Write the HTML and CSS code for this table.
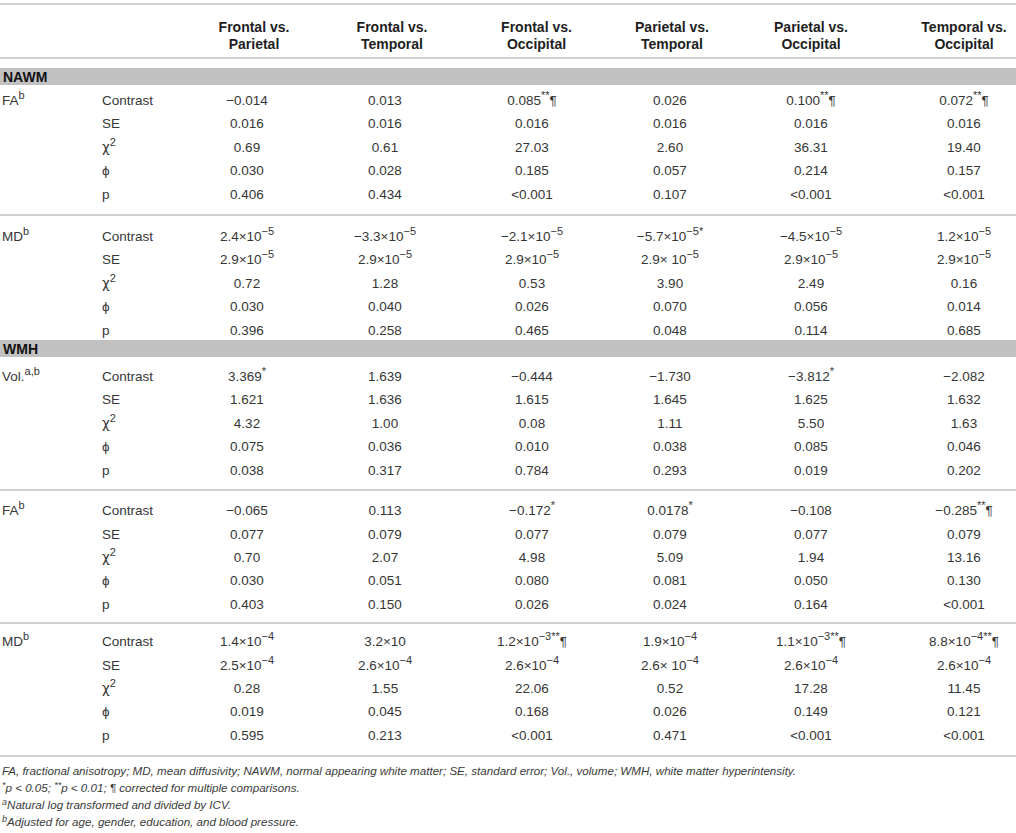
FILE: index.html
```html
<!DOCTYPE html>
<html>
<head>
<meta charset="utf-8">
<link rel="stylesheet" href="styles.css">
</head>
<body>
<table class="stats">
  <colgroup>
    <col class="c-lab"><col class="c-stat"><col class="c-d1"><col class="c-d2"><col class="c-d3"><col class="c-d4"><col class="c-d5"><col class="c-d6">
  </colgroup>
  <thead>
    <tr>
      <th></th><th></th>
      <th class="h1">Frontal vs.<br>Parietal</th>
      <th class="h2">Frontal vs.<br>Temporal</th>
      <th class="h3">Frontal vs.<br>Occipital</th>
      <th class="h4">Parietal vs.<br>Temporal</th>
      <th>Parietal vs.<br>Occipital</th>
      <th class="last">Temporal vs.<br>Occipital</th>
    </tr>
  </thead>
  <tbody class="section first-section">
    <tr><td colspan="8"><div class="band">NAWM</div></td></tr>
  </tbody>
  <tbody class="group g1">
    <tr><td class="lab">FA<sup>b</sup></td><td class="stat">Contrast</td><td>−0.014</td><td>0.013</td><td>0.085<sup>**</sup>¶</td><td>0.026</td><td>0.100<sup>**</sup>¶</td><td class="last">0.072<sup>**</sup>¶</td></tr>
    <tr><td></td><td class="stat">SE</td><td>0.016</td><td>0.016</td><td>0.016</td><td>0.016</td><td>0.016</td><td class="last">0.016</td></tr>
    <tr><td></td><td class="stat"><span class="chi">χ</span><sup>2</sup></td><td>0.69</td><td>0.61</td><td>27.03</td><td>2.60</td><td>36.31</td><td class="last">19.40</td></tr>
    <tr><td></td><td class="stat">ϕ</td><td>0.030</td><td>0.028</td><td>0.185</td><td>0.057</td><td>0.214</td><td class="last">0.157</td></tr>
    <tr><td></td><td class="stat">p</td><td>0.406</td><td>0.434</td><td>&lt;0.001</td><td>0.107</td><td>&lt;0.001</td><td class="last">&lt;0.001</td></tr>
  </tbody>
  <tbody class="group g2 ruled">
    <tr><td class="lab">MD<sup>b</sup></td><td class="stat">Contrast</td><td>2.4×10<sup>−5</sup></td><td>−3.3×10<sup>−5</sup></td><td>−2.1×10<sup>−5</sup></td><td>−5.7×10<sup>−5*</sup></td><td>−4.5×10<sup>−5</sup></td><td class="last">1.2×10<sup>−5</sup></td></tr>
    <tr><td></td><td class="stat">SE</td><td>2.9×10<sup>−5</sup></td><td>2.9×10<sup>−5</sup></td><td>2.9×10<sup>−5</sup></td><td>2.9× 10<sup>−5</sup></td><td>2.9×10<sup>−5</sup></td><td class="last">2.9×10<sup>−5</sup></td></tr>
    <tr><td></td><td class="stat"><span class="chi">χ</span><sup>2</sup></td><td>0.72</td><td>1.28</td><td>0.53</td><td>3.90</td><td>2.49</td><td class="last">0.16</td></tr>
    <tr><td></td><td class="stat">ϕ</td><td>0.030</td><td>0.040</td><td>0.026</td><td>0.070</td><td>0.056</td><td class="last">0.014</td></tr>
    <tr><td></td><td class="stat">p</td><td>0.396</td><td>0.258</td><td>0.465</td><td>0.048</td><td>0.114</td><td class="last">0.685</td></tr>
  </tbody>
  <tbody class="section">
    <tr><td colspan="8"><div class="band">WMH</div></td></tr>
  </tbody>
  <tbody class="group g3">
    <tr><td class="lab">Vol.<sup>a,b</sup></td><td class="stat">Contrast</td><td>3.369<sup>*</sup></td><td>1.639</td><td>−0.444</td><td>−1.730</td><td>−3.812<sup>*</sup></td><td class="last">−2.082</td></tr>
    <tr><td></td><td class="stat">SE</td><td>1.621</td><td>1.636</td><td>1.615</td><td>1.645</td><td>1.625</td><td class="last">1.632</td></tr>
    <tr><td></td><td class="stat"><span class="chi">χ</span><sup>2</sup></td><td>4.32</td><td>1.00</td><td>0.08</td><td>1.11</td><td>5.50</td><td class="last">1.63</td></tr>
    <tr><td></td><td class="stat">ϕ</td><td>0.075</td><td>0.036</td><td>0.010</td><td>0.038</td><td>0.085</td><td class="last">0.046</td></tr>
    <tr><td></td><td class="stat">p</td><td>0.038</td><td>0.317</td><td>0.784</td><td>0.293</td><td>0.019</td><td class="last">0.202</td></tr>
  </tbody>
  <tbody class="group g4 ruled">
    <tr><td class="lab">FA<sup>b</sup></td><td class="stat">Contrast</td><td>−0.065</td><td>0.113</td><td>−0.172<sup>*</sup></td><td>0.0178<sup>*</sup></td><td>−0.108</td><td class="last">−0.285<sup>**</sup>¶</td></tr>
    <tr><td></td><td class="stat">SE</td><td>0.077</td><td>0.079</td><td>0.077</td><td>0.079</td><td>0.077</td><td class="last">0.079</td></tr>
    <tr><td></td><td class="stat"><span class="chi">χ</span><sup>2</sup></td><td>0.70</td><td>2.07</td><td>4.98</td><td>5.09</td><td>1.94</td><td class="last">13.16</td></tr>
    <tr><td></td><td class="stat">ϕ</td><td>0.030</td><td>0.051</td><td>0.080</td><td>0.081</td><td>0.050</td><td class="last">0.130</td></tr>
    <tr><td></td><td class="stat">p</td><td>0.403</td><td>0.150</td><td>0.026</td><td>0.024</td><td>0.164</td><td class="last">&lt;0.001</td></tr>
  </tbody>
  <tbody class="group g5 ruled closing">
    <tr><td class="lab">MD<sup>b</sup></td><td class="stat">Contrast</td><td>1.4×10<sup>−4</sup></td><td>3.2×10</td><td>1.2×10<sup>−3**</sup>¶</td><td>1.9×10<sup>−4</sup></td><td>1.1×10<sup>−3**</sup>¶</td><td class="last">8.8×10<sup>−4**</sup>¶</td></tr>
    <tr><td></td><td class="stat">SE</td><td>2.5×10<sup>−4</sup></td><td>2.6×10<sup>−4</sup></td><td>2.6×10<sup>−4</sup></td><td>2.6× 10<sup>−4</sup></td><td>2.6×10<sup>−4</sup></td><td class="last">2.6×10<sup>−4</sup></td></tr>
    <tr><td></td><td class="stat"><span class="chi">χ</span><sup>2</sup></td><td>0.28</td><td>1.55</td><td>22.06</td><td>0.52</td><td>17.28</td><td class="last">11.45</td></tr>
    <tr><td></td><td class="stat">ϕ</td><td>0.019</td><td>0.045</td><td>0.168</td><td>0.026</td><td>0.149</td><td class="last">0.121</td></tr>
    <tr><td></td><td class="stat">p</td><td>0.595</td><td>0.213</td><td>&lt;0.001</td><td>0.471</td><td>&lt;0.001</td><td class="last">&lt;0.001</td></tr>
  </tbody>
</table>
<div class="notes">
  <p>FA, fractional anisotropy; MD, mean diffusivity; NAWM, normal appearing white matter; SE, standard error; Vol., volume; WMH, white matter hyperintensity.</p>
  <p><sup>*</sup>p &lt; 0.05; <sup>**</sup>p &lt; 0.01; ¶ corrected for multiple comparisons.</p>
  <p><sup>a</sup>Natural log transformed and divided by ICV.</p>
  <p><sup>b</sup>Adjusted for age, gender, education, and blood pressure.</p>
</div>
</body>
</html>
```
FILE: styles.css
```css
html, body {
  margin: 0;
  padding: 0;
  background: #fff;
}
body {
  font-family: "Liberation Sans", Arial, Helvetica, sans-serif;
  color: #363636;
  width: 1016px;
}
.stats {
  border-collapse: collapse;
  table-layout: fixed;
  width: 1016px;
  margin-top: 3px;
  font-size: 13.5px;
}
.c-lab { width: 100px; }
.c-stat { width: 78px; }
.c-d1 { width: 138px; }
.c-d2 { width: 138px; }
.c-d3 { width: 156px; }
.c-d4 { width: 120px; }
.c-d5 { width: 162px; }
.c-d6 { width: 124px; }

.stats thead tr {
  border-top: 2px solid #cfcfcf;
  border-bottom: 2px solid #cfcfcf;
}
.stats th {
  font-weight: bold;
  color: #1e1e1e;
  font-size: 14px;
  line-height: 17px;
  padding: 14px 0 4px;
  text-align: center;
  vertical-align: top;
}
.stats th.h1, .stats th.h2 { padding-left: 14px; }
.stats th.h3 { padding-left: 9px; }
.stats th.h4 { padding-left: 4px; }
.stats th.last, .stats td.last {
  padding-left: 20px;
}

.section td {
  padding: 0;
}
.first-section td {
  padding-top: 9px;
}
.band {
  background: #c1c1c1;
  height: 17px;
  line-height: 18px;
  font-weight: bold;
  color: #111;
  padding-left: 3px;
  font-size: 14px;
}

.group td {
  padding: 4px 0;
  line-height: 15.4px;
  text-align: center;
  white-space: nowrap;
}
.group td.lab {
  text-align: left;
  padding-left: 2px;
}
.group td.stat {
  text-align: left;
  padding-left: 2px;
}
.ruled tr:first-child {
  border-top: 2px solid #cfcfcf;
}

.g1 tr:first-child td { padding-top: 8px; }
.g1 tr:last-child td { padding-bottom: 12px; }
.g2 tr:first-child td { padding-top: 13px; }
.g2 tr:last-child td { padding-bottom: 2px; }
.g3 tr:first-child td { padding-top: 12px; }
.g3 tr:last-child td { padding-bottom: 11px; }
.g4 tr:first-child td { padding-top: 12px; }
.g4 tr:last-child td { padding-bottom: 10px; }
.g5 tr:first-child td { padding-top: 10px; }
.g5 tr:last-child td { padding-bottom: 12px; }
.closing tr:last-child {
  border-bottom: 2px solid #cfcfcf;
}

sup {
  font-size: 11px;
  line-height: 0;
  vertical-align: 6px;
}
.chi {
  font-family: "DejaVu Sans", sans-serif;
  font-size: 13.5px;
}

.notes {
  padding-top: 5px;
  padding-left: 2px;
  font-style: italic;
  font-size: 11.6px;
  color: #3a3a3a;
}
.notes p {
  margin: 0;
  line-height: 17px;
}
.notes sup {
  font-size: 9px;
  vertical-align: 4px;
}
```
